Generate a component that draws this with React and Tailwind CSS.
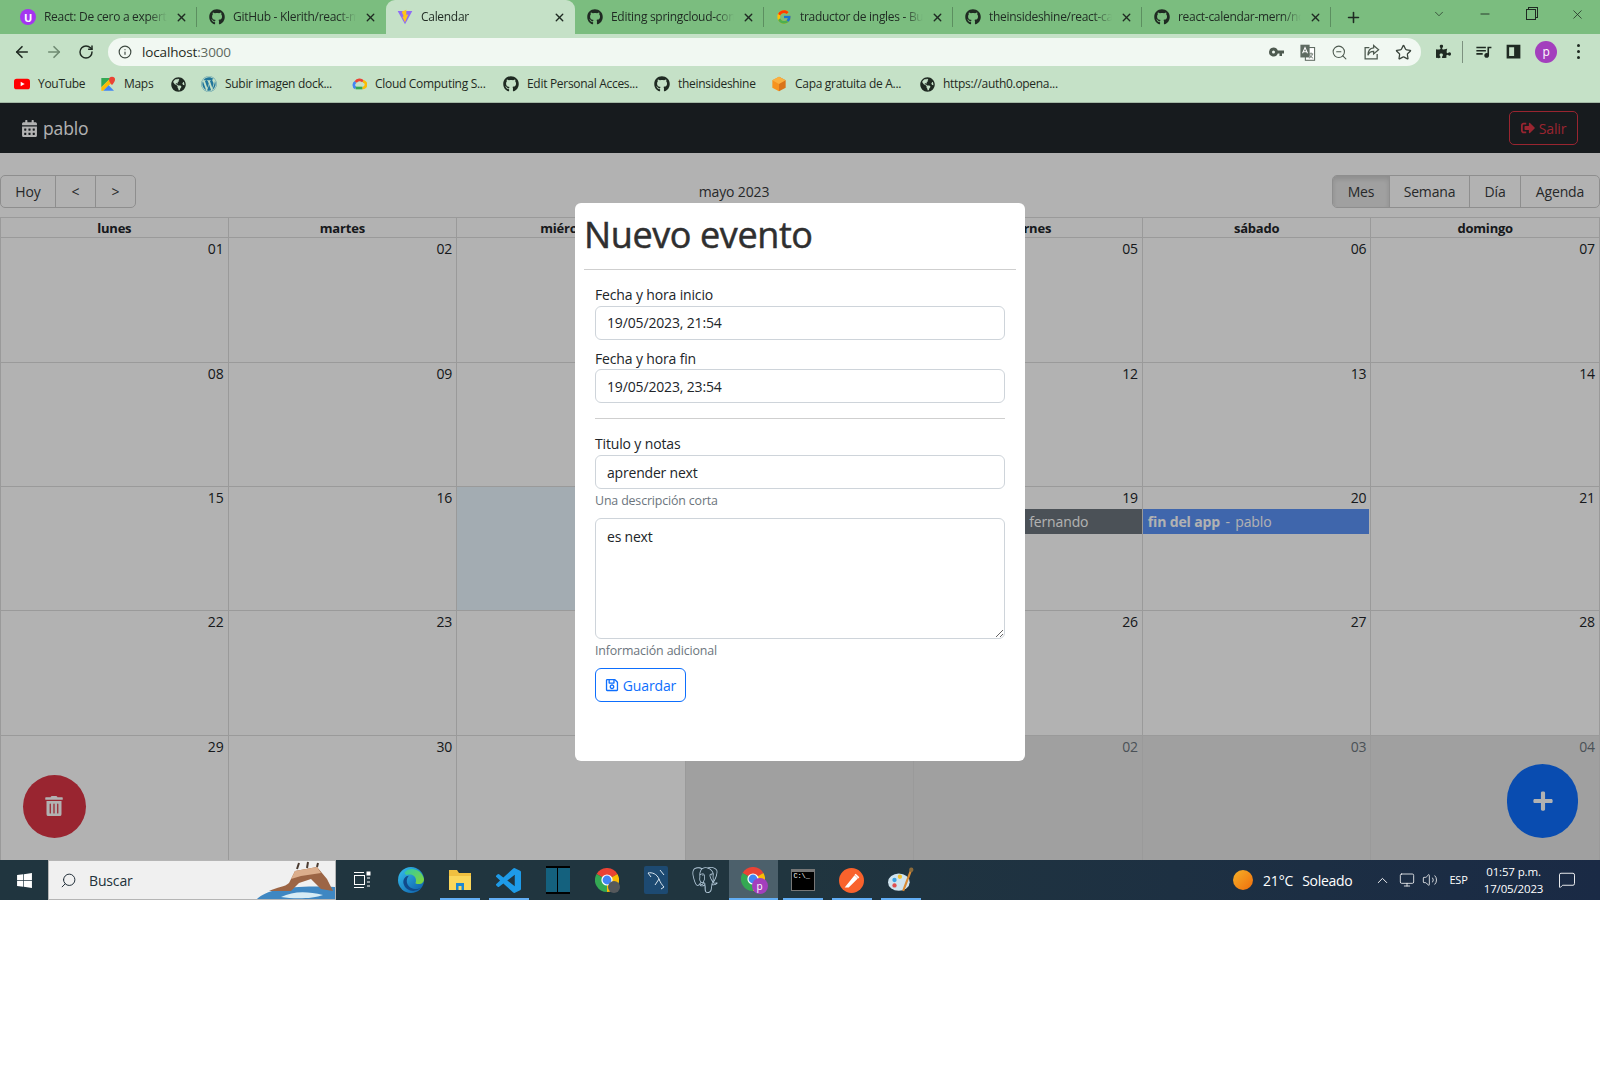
import React from "react";
import { FaCalendarAlt, FaSignOutAlt, FaTrashAlt, FaPlus, FaRegSave, FaGithub, FaWindows, FaWordpress, FaGlobeAmericas, FaPuzzlePiece } from "react-icons/fa";
import { FcGoogle } from "react-icons/fc";
import { MdQueueMusic } from "react-icons/md";
import { SiPostgresql } from "react-icons/si";
import { ArrowLeft, ArrowRight, RotateCw, Info, ZoomOut, Star, Plus, ChevronDown, ChevronUp, Minus, X, Search, Monitor, Volume2, MessageSquare } from "lucide-react";

const ChromeIcon = ({ size = 32 }) => (
  <svg width={size} height={size} viewBox="0 0 24 24">
    <path d="M12 12 L22.4 6 A12 12 0 0 0 1.6 6 Z" fill="#ea4335" />
    <path d="M12 12 L22.4 6 A12 12 0 0 1 12 24 Z" fill="#fbbc04" />
    <path d="M12 12 L12 24 A12 12 0 0 1 1.6 6 Z" fill="#34a853" />
    <circle cx="12" cy="12" r="5.6" fill="#fff" />
    <circle cx="12" cy="12" r="4.4" fill="#4285f4" />
  </svg>
);

const UdemyIcon = () => (
  <div className="w-4 h-4 rounded-full bg-[#a435f0] flex items-center justify-center text-white text-[11px] font-bold leading-none">U</div>
);

const ViteIcon = () => (
  <svg width="16" height="16" viewBox="0 0 24 24">
    <path d="M1 3 L23 3 L12 23 Z" fill="#8f6cf5" />
    <path d="M14 1 L7 4 L10 11 L8 12 L12 20 L17 8 L14 9 Z" fill="#ffc517" />
  </svg>
);

const YoutubeIcon = () => (
  <svg width="16" height="16" viewBox="0 0 24 24">
    <rect x="0" y="4" width="24" height="16" rx="4" fill="#f00" />
    <path d="M10 8.5 L16 12 L10 15.5 Z" fill="#fff" />
  </svg>
);

const MapsIcon = () => (
  <svg width="16" height="16" viewBox="0 0 24 24">
    <path d="M2 3 H16 L2 17 Z" fill="#34a853" />
    <path d="M2 17 L16 3 H22 V6 L5 22 H2 Z" fill="#fbbc04" />
    <path d="M5 22 L13 14 L21 22 Z" fill="#4285f4" />
    <path d="M18 1 a4.5 4.5 0 0 1 4.5 4.5 c0 3 -4.5 8 -4.5 8 s-4.500 -5 -4.500 -8 a4.500 4.500 0 0 1 4.500 -4.500 Z" fill="#ea4335" />
  </svg>
);

const CloudIcon = () => (
  <svg width="16" height="16" viewBox="0 0 24 24" fill="none" strokeWidth="4">
    <path d="M7 18 A5 5 0 0 1 7 9" stroke="#4285f4" />
    <path d="M7 9 A7 7 0 0 1 18 8" stroke="#ea4335" />
    <path d="M18 8 A5 5 0 0 1 17 18" stroke="#fbbc04" />
    <path d="M17 18 H7" stroke="#34a853" />
  </svg>
);

const AwsBox = () => (
  <svg width="16" height="16" viewBox="0 0 24 24">
    <path d="M12 1 L22 6.500 V17.500 L12 23 Z" fill="#d9741a" />
    <path d="M12 1 L2 6.500 V17.500 L12 23 Z" fill="#f7931e" />
    <path d="M2 6.500 L12 12 L22 6.500 L12 1 Z" fill="#fbb040" />
  </svg>
);

const KeyIcon = () => (
  <svg width="15" height="10" viewBox="0 0 15 10" fill="#4e5a50">
    <path fillRule="evenodd" d="M4.500 0.500 a4.500 4.500 0 0 1 4.300 3 H15 V6.500 H13 V9 H10.500 V6.500 H8.800 a4.500 4.500 0 1 1 -4.300 -6 Z M4.500 3.500 a1.500 1.500 0 1 0 0 3 a1.500 1.500 0 0 0 0 -3 Z" />
  </svg>
);

const TranslateIcon = () => (
  <svg width="17" height="17" viewBox="0 0 24 24">
    <rect x="9" y="5" width="13" height="18" fill="#fff" stroke="#5f6b62" strokeWidth="1.5" />
    <rect x="2" y="1" width="13" height="18" fill="#5f6b62" />
    <path d="M5 13 L8.500 5 L12 13 M6 11 H11" fill="none" stroke="#fff" strokeWidth="1.500" />
    <path d="M14 14 H20 M17 12 V14 M19 14 C18 18 16 19 14 20 M15 15 C16 18 18 19 20 20" fill="none" stroke="#5f6b62" strokeWidth="1.200" />
  </svg>
);

const ShareIcon = () => (
  <svg width="17" height="17" viewBox="0 0 24 24" fill="none" stroke="#4e5a50" strokeWidth="1.800">
    <path d="M9 5 H3 V21 H20 V14" />
    <path d="M15 2 L22 8 L15 14 V10.500 C11 10.500 8.500 12 7 16 C7 10 10 6 15 5.500 Z" />
  </svg>
);

const SideIcon = () => (
  <svg width="15" height="15" viewBox="0 0 24 24" fill="#1f2a22">
    <path d="M1 1 H23 V23 H1 Z M5 5 V19 H13 V5 Z" fillRule="evenodd" />
  </svg>
);

const EdgeIcon = () => (
  <svg width="26" height="26" viewBox="0 0 24 24">
    <defs>
      <linearGradient id="edgeA" x1="0" y1="0" x2="1" y2="1">
        <stop offset="0" stopColor="#35c1f1" />
        <stop offset="1" stopColor="#0c59a4" />
      </linearGradient>
      <linearGradient id="edgeB" x1="0" y1="0" x2="1" y2="1">
        <stop offset="0" stopColor="#2fc9a8" />
        <stop offset="1" stopColor="#86d633" />
      </linearGradient>
    </defs>
    <circle cx="12" cy="12" r="12" fill="url(#edgeA)" />
    <path d="M6 5 C11 -1 22 2 24 11 C24 15 20 17 16 15 C18 11 15 7 11 7 C8.500 7 7 8 6 5 Z" fill="url(#edgeB)" />
    <path d="M10 8 C7 11 7 18 14 20 C17 21 20 20 21 19 C17 24 7 23 5 15 C4.500 11 7 8 10 8 Z" fill="#114a8b" />
  </svg>
);

const FolderIcon = () => (
  <svg width="24" height="24" viewBox="0 0 24 24">
    <path d="M1 2 H9 L11 5 H23 V22 H1 Z" fill="#f0c040" />
    <path d="M1 8 H23 V22 H1 Z" fill="#fbd75b" />
    <path d="M8 22 V15 H16 V22 H13.500 V18 H10.500 V22 Z" fill="#1e88d2" />
  </svg>
);

const VsCodeIcon = () => (
  <svg width="25" height="25" viewBox="0 0 24 24" fill="#1e9be8">
    <path d="M23.15 2.587L18.21.21a1.494 1.494 0 0 0-1.705.29l-9.46 8.63-4.12-3.128a.999.999 0 0 0-1.276.057L.327 7.261A1 1 0 0 0 .326 8.74L3.899 12 .326 15.26a1 1 0 0 0 .001 1.479L1.65 17.94a.999.999 0 0 0 1.276.057l4.12-3.128 9.46 8.63a1.492 1.492 0 0 0 1.704.29l4.942-2.377A1.5 1.5 0 0 0 24 20.06V3.939a1.5 1.5 0 0 0-.85-1.352zm-5.146 14.861L10.826 12l7.178-5.448v10.896z" />
  </svg>
);

const PanelIcon = () => (
  <div className="w-6 h-7 bg-[#14617e] border-y-2 border-black flex justify-center">
    <div className="w-px bg-black" />
  </div>
);

const ChromeGrayBadge = () => (
  <div className="relative w-[24px] h-[24px]">
    <ChromeIcon size={24} />
    <div className="absolute -right-[1px] -bottom-[1px] w-3 h-3 rounded-full bg-[#55595c]" />
  </div>
);

const MysqlBadge = () => (
  <svg width="24" height="28" viewBox="0 0 24 28">
    <rect width="24" height="28" rx="2" fill="#1d4a72" />
    <path d="M4 7 C8 6 13 8 15 13 C16 16 18 19 20 21 L17 23 M15 13 L11 19 M16 4 L20 9 M4 7 L7 11" fill="none" stroke="#dbe7f0" strokeWidth="1" />
  </svg>
);

const ChromeProfile = () => (
  <div className="relative w-[26px] h-[26px]">
    <ChromeIcon size={24} />
    <div className="absolute -right-[1px] -bottom-[1px] w-[16px] h-[16px] rounded-full bg-[#a33fbd] text-white text-[10px] leading-[16px] text-center">p</div>
  </div>
);

const TerminalIcon = () => (
  <div className="w-6 h-[22px] bg-black border border-[#777] border-t-[3px] pl-[2px] text-white text-[7px] leading-[9px] font-['Liberation_Mono',monospace]">C:\_</div>
);

const PostmanIcon = () => (
  <svg width="25" height="27" viewBox="0 0 24 24">
    <circle cx="12" cy="12" r="12" fill="#f9622c" />
    <path d="M7 18 L15 8 L17 10 L9 18 Z M15.500 6 L19 9.500" fill="#fff" stroke="#fff" strokeWidth="1.500" />
  </svg>
);

const PaintIcon = () => (
  <svg width="26" height="28" viewBox="0 0 24 24">
    <ellipse cx="10" cy="14" rx="10" ry="8" fill="#cfe3ee" />
    <circle cx="6" cy="12" r="2" fill="#3aa0e0" />
    <circle cx="11" cy="9" r="2" fill="#f2c230" />
    <circle cx="6" cy="17" r="2" fill="#e04f4f" />
    <path d="M22 1 L14 22" stroke="#d98a34" strokeWidth="2" />
    <circle cx="21.500" cy="2.500" r="2" fill="#8a6a3a" />
  </svg>
);

const TaskViewIcon = () => (
  <svg width="18" height="18" viewBox="0 0 18 18" fill="none" stroke="#fff" strokeWidth="1">
    <path d="M1 1.500 H11 M1 16.500 H11" />
    <rect x="1.500" y="4.500" width="10" height="9" />
    <rect x="14" y="1" width="3" height="3" fill="#fff" />
    <path d="M14 7 H17 M14 11 H17 M14 15 H17" />
  </svg>
);

const MountainArt = () => (
  <svg width="80" height="40" viewBox="0 0 80 40">
    <path d="M0 40 C10 28 35 24 80 26 V40 Z" fill="#3f87c2" />
    <path d="M14 30 C22 26 30 26 34 22 L40 10 L62 6 L72 18 L78 30 L66 28 L56 18 L44 22 L36 30 Z" fill="#9c6545" />
    <path d="M36 18 L40 10 L62 6 L66 12 L46 15 Z" fill="#dcae8c" />
    <path d="M42 8 L44 2 M52 7 L53 1 M62 6 L63 2" stroke="#4a3a30" strokeWidth="2" />
    <path d="M26 36 C38 30 52 30 68 34 C58 38 38 38 26 36 Z" fill="#d7ecf5" />
  </svg>
);

const tabs = [
  { icon: <UdemyIcon />, title: "React: De cero a experto", divider: true },
  { icon: <FaGithub size={16} color="#1f2a22" />, title: "GitHub - Klerith/react-mern" },
  { icon: <ViteIcon />, title: "Calendar", active: true },
  { icon: <FaGithub size={16} color="#1f2a22" />, title: "Editing springcloud-config", divider: true },
  { icon: <FcGoogle size={16} />, title: "traductor de ingles - Buscar", divider: true },
  { icon: <FaGithub size={16} color="#1f2a22" />, title: "theinsideshine/react-calendar", divider: true },
  { icon: <FaGithub size={16} color="#1f2a22" />, title: "react-calendar-mern/node", divider: true },
];

const bookmarks = [
  { icon: <YoutubeIcon />, label: "YouTube", width: "w-[86px]" },
  { icon: <MapsIcon />, label: "Maps", width: "w-[70px]" },
  { icon: <FaGlobeAmericas size={15} color="#1f2a22" />, label: "", width: "w-[31px]" },
  { icon: <FaWordpress size={16} color="#21759b" />, label: "Subir imagen dock...", width: "w-[150px]" },
  { icon: <CloudIcon />, label: "Cloud Computing S...", width: "w-[152px]" },
  { icon: <FaGithub size={16} color="#1f2a22" />, label: "Edit Personal Acces...", width: "w-[151px]" },
  { icon: <FaGithub size={16} color="#1f2a22" />, label: "theinsideshine", width: "w-[117px]" },
  { icon: <AwsBox />, label: "Capa gratuita de A...", width: "w-[148px]" },
  { icon: <FaGlobeAmericas size={15} color="#1f2a22" />, label: "https://auth0.opena...", width: "w-[140px]" },
];

const taskIcons = [
  { icon: <TaskViewIcon /> },
  { icon: <EdgeIcon /> },
  { icon: <FolderIcon />, open: true },
  { icon: <VsCodeIcon />, open: true },
  { icon: <PanelIcon /> },
  { icon: <ChromeGrayBadge /> },
  { icon: <MysqlBadge /> },
  { icon: <SiPostgresql size={26} color="#b9cfe0" /> },
  { icon: <ChromeProfile />, open: true, focused: true },
  { icon: <TerminalIcon />, open: true },
  { icon: <PostmanIcon />, open: true },
  { icon: <PaintIcon />, open: true },
];

const weeks = [
  ["01", "02", "03", "04", "05", "06", "07"],
  ["08", "09", "10", "11", "12", "13", "14"],
  ["15", "16", "17", "18", "19", "20", "21"],
  ["22", "23", "24", "25", "26", "27", "28"],
  ["29", "30", "31", "01", "02", "03", "04"],
];

const dayNames = ["lunes", "martes", "miércoles", "jueves", "viernes", "sábado", "domingo"];

const BrowserChrome = () => (
  <div className="h-[103px] bg-[#c5e1c7] border-b border-[#a3b8a5] text-[#1f2a22] text-[12px]">
    <div className="h-[34px] bg-[#7bbd7f] flex pl-[8px] items-end">
      {tabs.map((tab, i) => (
        <div
          key={i}
          className={tab.active
            ? "w-[189px] h-[34px] bg-[#c5e1c7] rounded-t-[9px] flex items-center pl-[11px] gap-[8px]"
            : "w-[189px] h-[34px] flex items-center pl-[12px] gap-[8px]"}
        >
          <div className="w-4 h-4 shrink-0">{tab.icon}</div>
          <span className="flex-1 overflow-hidden whitespace-nowrap tracking-[-0.3px] [mask-image:linear-gradient(to_right,black_85%,transparent)]">{tab.title}</span>
          <X size={13} strokeWidth={2.5} className="shrink-0" />
          <div className={tab.divider ? "w-px h-[20px] bg-[#5c8f60]" : "w-px h-[20px]"} />
        </div>
      ))}
      <div className="h-[34px] flex items-center ml-[14px]"><Plus size={17} strokeWidth={2.2} /></div>
      <div className="flex-1 h-[34px] flex items-center justify-end pb-[6px] pr-[15px] gap-[34px]">
        <ChevronDown size={14} strokeWidth={1.2} className="-mr-[2px]" />
        <Minus size={14} strokeWidth={1.5} />
        <div className="w-[10px] h-[11px] border border-[#1f2a22] shadow-[2px_-2px_0_-1px_#7bbd7f,2px_-2px_0_0_#1f2a22]" />
        <X size={15} strokeWidth={1.2} />
      </div>
    </div>
    <div className="h-[35px] flex items-center">
      <div className="w-[108px] flex items-center pl-[13px] gap-[14px]">
        <ArrowLeft size={18} strokeWidth={2.2} />
        <ArrowRight size={18} strokeWidth={2.2} color="#6f8a72" />
        <RotateCw size={16} strokeWidth={2.2} className="ml-[1px]" />
      </div>
      <div className="w-[1313px] h-[28px] mt-[1px] bg-[#f1f8f2] rounded-full flex items-center pl-[10px] pr-[9px] text-[13.5px]">
        <Info size={14} strokeWidth={2} color="#3f4a42" />
        <span className="ml-[10px] flex-1">localhost<span className="text-[#5e6a60]">:3000</span></span>
        <div className="flex items-center gap-[15px]">
          <KeyIcon />
          <TranslateIcon />
          <ZoomOut size={17} strokeWidth={1.5} color="#4e5a50" />
          <ShareIcon />
          <Star size={17} strokeWidth={1.8} color="#3a443c" />
        </div>
      </div>
      <div className="flex-1 flex items-center pl-[15px] gap-[11px]">
        <FaPuzzlePiece size={15} />
        <div className="w-px h-[22px] bg-[#7d917f]" />
        <MdQueueMusic size={19} />
        <div className="ml-[2px]"><SideIcon /></div>
        <div className="w-[22px] h-[22px] rounded-full bg-[#a33fbd] text-white text-center leading-[22px] ml-[3px]">p</div>
        <div className="flex flex-col gap-[3px] ml-[9px]">
          <div className="w-[3px] h-[3px] rounded-full bg-[#1f2a22]" />
          <div className="w-[3px] h-[3px] rounded-full bg-[#1f2a22]" />
          <div className="w-[3px] h-[3px] rounded-full bg-[#1f2a22]" />
        </div>
      </div>
    </div>
    <div className="h-[33px] flex items-center pl-[14px] pb-[3px] tracking-[-0.3px]">
      {bookmarks.map((b, i) => (
        <div key={i} className={`${b.width} flex items-center gap-[8px] whitespace-nowrap`}>
          <div className="w-4 h-4 flex items-center justify-center shrink-0">{b.icon}</div>
          {b.label && <span>{b.label}</span>}
        </div>
      ))}
    </div>
  </div>
);

const Navbar = () => (
  <nav className="h-[50px] bg-[#21272c] flex items-center justify-between pl-[21px] pr-[22px]">
    <div className="flex items-center text-white text-[17.5px] gap-[5px]">
      <FaCalendarAlt size={17} />
      <span>pablo</span>
    </div>
    <button className="h-[34px] w-[69px] border border-[#dc3545] rounded-[5px] text-[#dc3545] flex items-center justify-center gap-[4px] text-[14px]">
      <FaSignOutAlt size={14} />
      Salir
    </button>
  </nav>
);

const CalendarView = () => (
  <div className="h-[707px] bg-white flex flex-col text-[#373a3c] text-[14px]">
    <div className="flex items-center h-[33px] mt-[22px] mb-[9px]">
      <div className="flex h-[33px] border border-[#ccc] rounded-[5px]">
        <button className="w-[55px] border-r border-[#ccc]">Hoy</button>
        <button className="w-[40px] border-r border-[#ccc]">&lt;</button>
        <button className="w-[39px]">&gt;</button>
      </div>
      <div className="flex-1 text-center">mayo 2023</div>
      <div className="flex h-[33px] border border-[#ccc] rounded-[5px] overflow-hidden">
        <button className="w-[57px] border-r border-[#ccc] bg-[#e6e6e6] shadow-[inset_0_3px_5px_rgba(0,0,0,0.125)]">Mes</button>
        <button className="w-[80px] border-r border-[#ccc]">Semana</button>
        <button className="w-[51px] border-r border-[#ccc]">Día</button>
        <button className="w-[78px]">Agenda</button>
      </div>
    </div>
    <div className="flex-1 flex flex-col">
      <div className="grid grid-cols-7 h-[21px] border-y border-[#ddd] text-[#212529] font-bold text-[13px] tracking-[-0.2px]">
        {dayNames.map((d) => (
          <div key={d} className="text-center leading-[21px] border-r border-[#ddd] first:border-l">{d}</div>
        ))}
      </div>
      <div className="flex-1 grid grid-rows-[125px_124px_124px_125px_1fr]">
        {weeks.map((week, w) => (
          <div key={w} className="grid grid-cols-7 border-b border-[#ddd] last:border-b-0">
            {week.map((day, d) => {
              const off = w === 4 && d >= 3;
              const today = w === 2 && d === 2;
              return (
                <div
                  key={d}
                  className={
                    (off ? "bg-[#e6e6e6] text-[#6c757d] " : today ? "bg-[#eaf6ff] text-[#212529] " : "text-[#212529] ") +
                    "border-r border-[#ddd] first:border-l flex flex-col"
                  }
                >
                  <div className="h-[22px] text-right pr-[4px] leading-[21px] text-[14px]">{day}</div>
                  {w === 2 && d === 4 && (
                    <div className="h-[25px] bg-[#6c757d] text-white pl-[115px] leading-[25px]">fernando</div>
                  )}
                  {w === 2 && d === 5 && (
                    <div className="h-[25px] mr-[1px] bg-[#5b92f7] text-white pl-[5px] leading-[25px]"><b>fin del app</b><span className="mx-[2px]"> - </span>pablo</div>
                  )}
                </div>
              );
            })}
          </div>
        ))}
      </div>
    </div>
  </div>
);

const EventModal = () => (
  <div className="absolute left-[575px] top-[100px] w-[450px] h-[558px] bg-white rounded-[6px] px-[9px] text-[14px] text-[#212529]">
    <h1 className="h-[67px] leading-[64px] text-[36px] font-normal tracking-[-0.4px] [-webkit-text-stroke:0.5px_#2f2f2f] border-b border-[#cfcfcf] text-[#2f2f2f]">Nuevo evento</h1>
    <form className="px-[11px] pt-[15px]">
      <label className="block h-[20px] leading-[20px] mb-[1px]">Fecha y hora inicio</label>
      <input readOnly value="19/05/2023, 21:54" className="block w-full h-[34px] border border-[#ced4da] rounded-[6px] px-[11px] pb-[1px] mb-[9px]" />
      <label className="block h-[20px] leading-[20px]">Fecha y hora fin</label>
      <input readOnly value="19/05/2023, 23:54" className="block w-full h-[34px] border border-[#ced4da] rounded-[6px] px-[11px]" />
      <hr className="mt-[15px] mb-[15px] border-[#cfcfcf]" />
      <label className="block h-[20px] leading-[20px] mb-[1px]">Titulo y notas</label>
      <input readOnly value="aprender next" className="block w-full h-[34px] border border-[#ced4da] rounded-[6px] px-[11px] tracking-[-0.2px]" />
      <div className="h-[21px] leading-[24px] text-[12.4px] text-[#6c757d]">Una descripción corta</div>
      <textarea readOnly value="es next" className="block mt-[8px] w-full h-[121px] border border-[#ced4da] rounded-[6px] px-[11px] py-[7px] resize-y tracking-[-0.2px]" />
      <div className="h-[22px] leading-[24px] text-[12.4px] text-[#6c757d]">Información adicional</div>
      <button type="button" className="mt-[7px] w-[91px] h-[34px] border border-[#0d6efd] rounded-[6px] text-[#0d6efd] flex items-center justify-center gap-[4px]">
        <FaRegSave size={14} />
        Guardar
      </button>
    </form>
  </div>
);

const Taskbar = () => (
  <div className="h-[40px] bg-gradient-to-r from-[#20353f] via-[#20353f] to-[#1a2a45] flex items-center text-white text-[13px]">
    <div className="w-[48px] flex justify-center"><FaWindows size={17} /></div>
    <div className="w-[288px] h-[40px] bg-[#f0f0f0] border border-[#b5b5b5] flex items-center text-[#22303a] relative overflow-hidden">
      <Search size={17} strokeWidth={1.4} className="ml-[11px] -scale-x-100" />
      <span className="ml-[12px] text-[14px]">Buscar</span>
      <div className="absolute right-0 top-0"><MountainArt /></div>
    </div>
    <div className="flex h-[40px] pl-[1px]">
      {taskIcons.map((t, i) => (
        <div
          key={i}
          className={`relative w-[49px] h-[40px] flex items-center justify-center ${t.focused ? "bg-[#4c606b]" : ""}`}
        >
          {t.icon}
          {t.open && <div className={t.focused ? "absolute left-0 right-0 bottom-0 h-[2px] bg-[#62aef5]" : "absolute left-[5px] right-[4px] bottom-0 h-[2px] bg-[#62aef5]"} />}
        </div>
      ))}
    </div>
    <div className="flex-1 flex items-center pl-[308px]">
      <div className="w-[20px] h-[20px] rounded-full bg-gradient-to-br from-[#f5b027] to-[#ee6c0a]" />
      <span className="ml-[10px] text-[14px]">21°C</span>
      <span className="ml-[9px] text-[14px] tracking-[-0.3px]">Soleado</span>
      <ChevronUp size={17} strokeWidth={1.3} className="ml-[22px]" />
      <Monitor size={16} strokeWidth={1.2} className="ml-[8px]" />
      <Volume2 size={16} strokeWidth={1.2} className="ml-[7px]" />
      <span className="ml-[11px] text-[11px]">ESP</span>
      <div className="ml-[16px] text-[11.5px] leading-[17px] text-center whitespace-nowrap">
        <div>01:57 p.m.</div>
        <div>17/05/2023</div>
      </div>
      <MessageSquare size={18} strokeWidth={1.2} className="ml-[15px]" />
    </div>
  </div>
);

export default function App() {
  return (
    <div className="w-[1600px] h-[1068px] bg-white font-['Open_Sans',sans-serif] tracking-[-0.15px] overflow-hidden">
      <BrowserChrome />
      <div className="relative">
        <Navbar />
        <CalendarView />
        <button className="absolute left-[23px] top-[672px] w-[63px] h-[63px] rounded-full bg-[#dc3545] text-white flex items-center justify-center pr-[2px] pb-[2px]">
          <FaTrashAlt size={20} />
        </button>
        <button className="absolute left-[1507px] top-[661px] w-[71px] h-[74px] rounded-full bg-[#0d6efd] text-white flex items-center justify-center">
          <FaPlus size={22} />
        </button>
        <div className="absolute inset-0 bg-black/30" />
        <EventModal />
      </div>
      <Taskbar />
    </div>
  );
}
